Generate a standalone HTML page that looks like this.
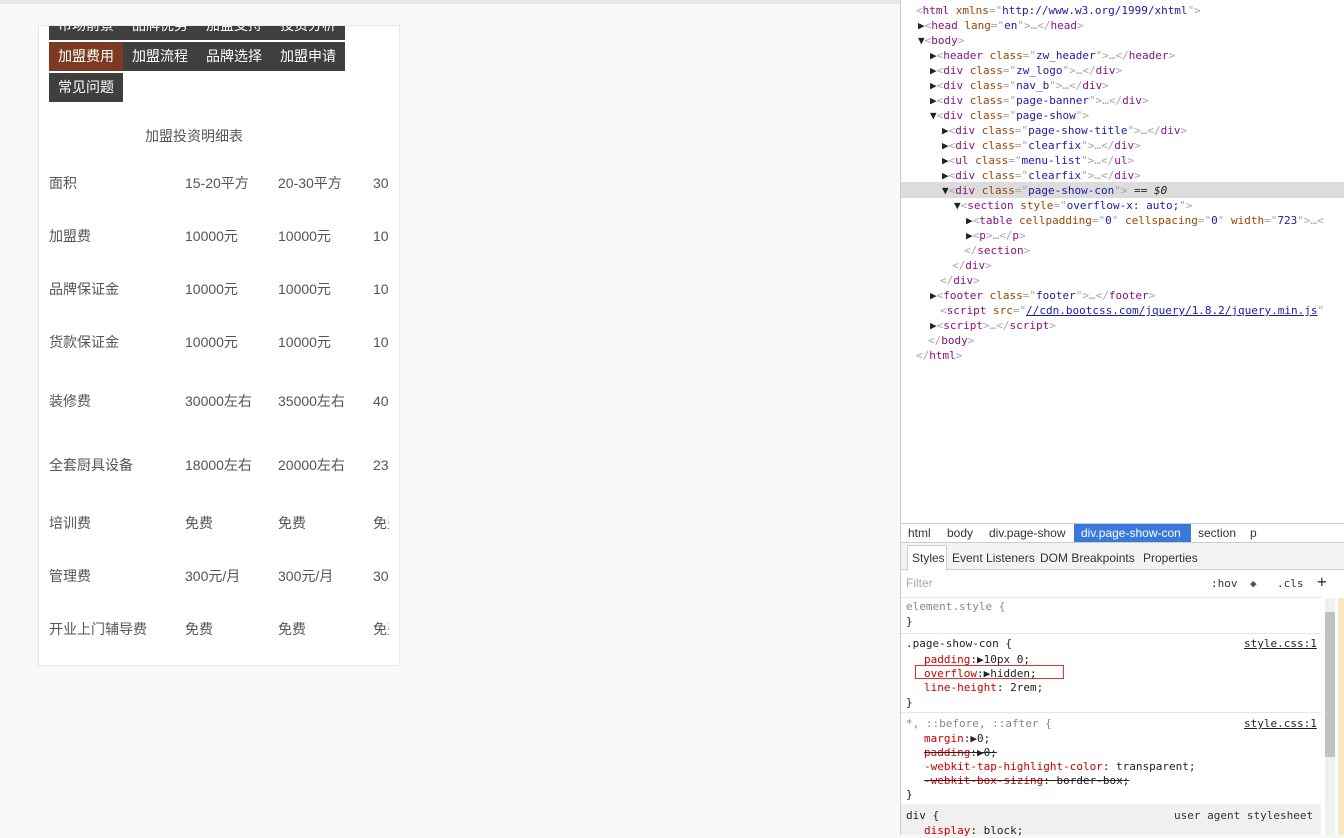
<!DOCTYPE html>
<html><head><meta charset="utf-8"><style>
*{margin:0;padding:0;box-sizing:border-box}
body{width:1344px;height:835px;background:#f8f8f8;position:relative;overflow:hidden;font-family:"Liberation Sans","Noto Sans CJK SC",sans-serif;}
.top{position:absolute;left:0;top:0;width:900px;height:4px;background:#e6e6e6}
.card{position:absolute;left:38px;top:25px;width:362px;height:641px;background:#fff;border:1px solid #e8e8e8;overflow:hidden}
.b{position:absolute;width:74px;height:29px;background:#3f3f3f;color:#fff;font-size:14px;line-height:29px;text-align:center}
.b.a{background:#7a3b22}
.t{position:absolute;font-size:14px;color:#555;white-space:nowrap;line-height:20px}
.dev{position:absolute;left:900px;top:0;width:444px;height:835px;background:#fff;border-left:1px solid #ccc;font-family:"DejaVu Sans Mono","Liberation Mono",monospace;font-size:11px}
.l{position:absolute;white-space:nowrap;line-height:15px;color:#a5a5a5}
.tg{color:#881280}.at{color:#994500}.v{color:#1a1aa6}.k{color:#c80000}.g{color:#222}
.ui{font-family:"Liberation Sans",sans-serif;font-size:12px;color:#333}
</style></head><body>
<div class="top"></div>
<div class="card">
<div class="b" style="left:10px;top:-15px">市场前景</div>
<div class="b" style="left:84px;top:-15px">品牌优势</div>
<div class="b" style="left:158px;top:-15px">加盟支持</div>
<div class="b" style="left:232px;top:-15px">投资分析</div>
<div class="b a" style="left:10px;top:16px">加盟费用</div>
<div class="b" style="left:84px;top:16px">加盟流程</div>
<div class="b" style="left:158px;top:16px">品牌选择</div>
<div class="b" style="left:232px;top:16px">加盟申请</div>
<div class="b" style="left:10px;top:47px">常见问题</div>
<div class="t" style="left:106px;top:100px">加盟投资明细表</div>
<div class="t" style="left:10px;top:147px">面积</div><div class="t" style="left:146px;top:147px">15-20平方</div><div class="t" style="left:239px;top:147px">20-30平方</div><div class="t" style="left:334px;top:147px">30平方</div>
<div class="t" style="left:10px;top:200px">加盟费</div><div class="t" style="left:146px;top:200px">10000元</div><div class="t" style="left:239px;top:200px">10000元</div><div class="t" style="left:334px;top:200px">10000元</div>
<div class="t" style="left:10px;top:253px">品牌保证金</div><div class="t" style="left:146px;top:253px">10000元</div><div class="t" style="left:239px;top:253px">10000元</div><div class="t" style="left:334px;top:253px">10000元</div>
<div class="t" style="left:10px;top:306px">货款保证金</div><div class="t" style="left:146px;top:306px">10000元</div><div class="t" style="left:239px;top:306px">10000元</div><div class="t" style="left:334px;top:306px">10000元</div>
<div class="t" style="left:10px;top:365px">装修费</div><div class="t" style="left:146px;top:365px">30000左右</div><div class="t" style="left:239px;top:365px">35000左右</div><div class="t" style="left:334px;top:365px">40000左右</div>
<div class="t" style="left:10px;top:429px">全套厨具设备</div><div class="t" style="left:146px;top:429px">18000左右</div><div class="t" style="left:239px;top:429px">20000左右</div><div class="t" style="left:334px;top:429px">23000左右</div>
<div class="t" style="left:10px;top:487px">培训费</div><div class="t" style="left:146px;top:487px">免费</div><div class="t" style="left:239px;top:487px">免费</div><div class="t" style="left:334px;top:487px">免费</div>
<div class="t" style="left:10px;top:540px">管理费</div><div class="t" style="left:146px;top:540px">300元/月</div><div class="t" style="left:239px;top:540px">300元/月</div><div class="t" style="left:334px;top:540px">300元/月</div>
<div class="t" style="left:10px;top:593px">开业上门辅导费</div><div class="t" style="left:146px;top:593px">免费</div><div class="t" style="left:239px;top:593px">免费</div><div class="t" style="left:334px;top:593px">免费</div>
<div style="position:absolute;left:350px;top:140px;width:12px;height:500px;background:#fff"></div>
</div>
<div class="dev">
<div class="l" style="left:15px;top:3px">&lt;<span class="tg">html</span> <span class="at">xmlns</span>="<span class="v">http://www.w3.org/1999/xhtml</span>"&gt;</div>
<div class="l" style="left:17px;top:18px"><span class="g">▶</span>&lt;<span class="tg">head</span> <span class="at">lang</span>="<span class="v">en</span>"&gt;…&lt;/<span class="tg">head</span>&gt;</div>
<div class="l" style="left:17px;top:33px"><span class="g">▼</span>&lt;<span class="tg">body</span>&gt;</div>
<div class="l" style="left:29px;top:48px"><span class="g">▶</span>&lt;<span class="tg">header</span> <span class="at">class</span>="<span class="v">zw_header</span>"&gt;…&lt;/<span class="tg">header</span>&gt;</div>
<div class="l" style="left:29px;top:63px"><span class="g">▶</span>&lt;<span class="tg">div</span> <span class="at">class</span>="<span class="v">zw_logo</span>"&gt;…&lt;/<span class="tg">div</span>&gt;</div>
<div class="l" style="left:29px;top:78px"><span class="g">▶</span>&lt;<span class="tg">div</span> <span class="at">class</span>="<span class="v">nav_b</span>"&gt;…&lt;/<span class="tg">div</span>&gt;</div>
<div class="l" style="left:29px;top:93px"><span class="g">▶</span>&lt;<span class="tg">div</span> <span class="at">class</span>="<span class="v">page-banner</span>"&gt;…&lt;/<span class="tg">div</span>&gt;</div>
<div class="l" style="left:29px;top:108px"><span class="g">▼</span>&lt;<span class="tg">div</span> <span class="at">class</span>="<span class="v">page-show</span>"&gt;</div>
<div class="l" style="left:41px;top:123px"><span class="g">▶</span>&lt;<span class="tg">div</span> <span class="at">class</span>="<span class="v">page-show-title</span>"&gt;…&lt;/<span class="tg">div</span>&gt;</div>
<div class="l" style="left:41px;top:138px"><span class="g">▶</span>&lt;<span class="tg">div</span> <span class="at">class</span>="<span class="v">clearfix</span>"&gt;…&lt;/<span class="tg">div</span>&gt;</div>
<div class="l" style="left:41px;top:153px"><span class="g">▶</span>&lt;<span class="tg">ul</span> <span class="at">class</span>="<span class="v">menu-list</span>"&gt;…&lt;/<span class="tg">ul</span>&gt;</div>
<div class="l" style="left:41px;top:168px"><span class="g">▶</span>&lt;<span class="tg">div</span> <span class="at">class</span>="<span class="v">clearfix</span>"&gt;…&lt;/<span class="tg">div</span>&gt;</div>
<div style="position:absolute;left:0;top:182px;width:444px;height:16px;background:#dcdcdc"></div>
<div class="l" style="left:41px;top:183px"><span class="g">▼</span>&lt;<span class="tg">div</span> <span class="at">class</span>="<span class="v">page-show-con</span>"&gt; <span class="g">== <i>$0</i></span></div>
<div class="l" style="left:53px;top:198px"><span class="g">▼</span>&lt;<span class="tg">section</span> <span class="at">style</span>="<span class="v">overflow-x: auto;</span>"&gt;</div>
<div class="l" style="left:65px;top:213px"><span class="g">▶</span>&lt;<span class="tg">table</span> <span class="at">cellpadding</span>="<span class="v">0</span>" <span class="at">cellspacing</span>="<span class="v">0</span>" <span class="at">width</span>="<span class="v">723</span>"&gt;…&lt;</div>
<div class="l" style="left:65px;top:228px"><span class="g">▶</span>&lt;<span class="tg">p</span>&gt;…&lt;/<span class="tg">p</span>&gt;</div>
<div class="l" style="left:63px;top:243px">&lt;/<span class="tg">section</span>&gt;</div>
<div class="l" style="left:51px;top:258px">&lt;/<span class="tg">div</span>&gt;</div>
<div class="l" style="left:39px;top:273px">&lt;/<span class="tg">div</span>&gt;</div>
<div class="l" style="left:29px;top:288px"><span class="g">▶</span>&lt;<span class="tg">footer</span> <span class="at">class</span>="<span class="v">footer</span>"&gt;…&lt;/<span class="tg">footer</span>&gt;</div>
<div class="l" style="left:39px;top:303px">&lt;<span class="tg">script</span> <span class="at">src</span>="<span class="v" style="text-decoration:underline">//cdn.bootcss.com/jquery/1.8.2/jquery.min.js</span>"</div>
<div class="l" style="left:29px;top:318px"><span class="g">▶</span>&lt;<span class="tg">script</span>&gt;…&lt;/<span class="tg">script</span>&gt;</div>
<div class="l" style="left:27px;top:333px">&lt;/<span class="tg">body</span>&gt;</div>
<div class="l" style="left:15px;top:348px">&lt;/<span class="tg">html</span>&gt;</div>
<div style="position:absolute;left:0;top:523px;width:444px;height:20px;border-top:1px solid #ccc;border-bottom:1px solid #ccc;background:#fff"></div>
<div class="l ui" style="left:7px;top:526px">html</div>
<div class="l ui" style="left:46px;top:526px">body</div>
<div class="l ui" style="left:88px;top:526px">div.page-show</div>
<div style="position:absolute;left:173px;top:524px;width:117px;height:18px;background:#3879d9"></div>
<div class="l ui" style="left:180px;top:526px;color:#fff">div.page-show-con</div>
<div class="l ui" style="left:297px;top:526px">section</div>
<div class="l ui" style="left:349px;top:526px">p</div>
<div style="position:absolute;left:0;top:543px;width:444px;height:27px;background:#f3f3f3;border-bottom:1px solid #ccc"></div>
<div style="position:absolute;left:6px;top:545px;width:40px;height:26px;background:#fff;border:1px solid #ccc;border-bottom:none"></div>
<div class="l ui" style="left:11px;top:551px">Styles</div>
<div class="l ui" style="left:51px;top:551px">Event Listeners</div>
<div class="l ui" style="left:139px;top:551px">DOM Breakpoints</div>
<div class="l ui" style="left:242px;top:551px">Properties</div>
<div class="l ui" style="left:5px;top:576px;color:#aaa">Filter</div>
<div class="l" style="left:310px;top:576px;color:#333">:hov</div>
<div class="l" style="left:349px;top:576px;color:#555">◆</div>
<div class="l" style="left:376px;top:576px;color:#333">.cls</div>
<div class="l" style="left:416px;top:574px;color:#333;font-size:16px">+</div>
<div style="position:absolute;left:0;top:597px;width:420px;height:1px;background:#e6e6e6"></div>
<div class="l" style="left:5px;top:599px;color:#888">element.style {</div>
<div class="l g" style="left:5px;top:614px">}</div>
<div style="position:absolute;left:0;top:633px;width:420px;height:1px;background:#e6e6e6"></div>
<div class="l g" style="left:5px;top:636px">.page-show-con {</div>
<div class="l g" style="left:343px;top:636px;text-decoration:underline">style.css:1</div>
<div class="l g" style="left:23px;top:652px"><span class="k">padding</span>:▶10px 0;</div>
<div style="position:absolute;left:14px;top:665px;width:149px;height:14px;border:1px solid #d33"></div>
<div class="l g" style="left:23px;top:666px"><span class="k">overflow</span>:▶hidden;</div>
<div class="l g" style="left:23px;top:680px"><span class="k">line-height</span>: 2rem;</div>
<div class="l g" style="left:5px;top:695px">}</div>
<div style="position:absolute;left:0;top:712px;width:420px;height:1px;background:#e6e6e6"></div>
<div class="l" style="left:5px;top:716px;color:#888">*, ::before, ::after {</div>
<div class="l g" style="left:343px;top:716px;text-decoration:underline">style.css:1</div>
<div class="l g" style="left:23px;top:731px"><span class="k">margin</span>:▶0;</div>
<div class="l g" style="left:23px;top:745px;text-decoration:line-through"><span class="k">padding</span>:▶0;</div>
<div class="l g" style="left:23px;top:759px"><span class="k">-webkit-tap-highlight-color</span>: transparent;</div>
<div class="l g" style="left:23px;top:773px;text-decoration:line-through"><span class="k">-webkit-box-sizing</span>: border-box;</div>
<div class="l g" style="left:5px;top:787px">}</div>
<div style="position:absolute;left:0;top:804px;width:420px;height:31px;background:#f0f0f0"></div>
<div class="l g" style="left:5px;top:808px">div {</div>
<div class="l" style="left:273px;top:808px;color:#333">user agent stylesheet</div>
<div class="l g" style="left:23px;top:823px"><span class="k">display</span>: block;</div>
<div style="position:absolute;left:424px;top:598px;width:10px;height:237px;background:#f0f0f0"></div>
<div style="position:absolute;left:424px;top:612px;width:10px;height:145px;background:#c1c1c1"></div>
<div style="position:absolute;left:437px;top:598px;width:7px;height:237px;background:#f7e9c0"></div>
</div>
</body></html>
